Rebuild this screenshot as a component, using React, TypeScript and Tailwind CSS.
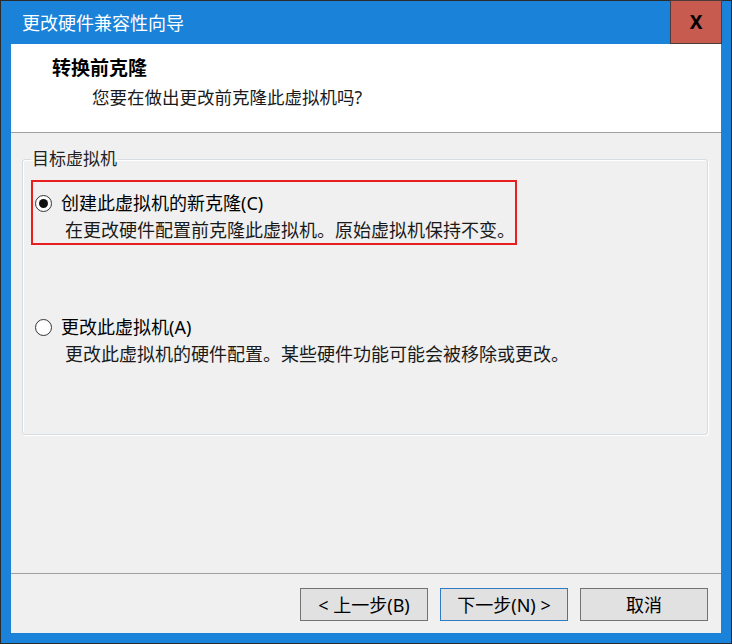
const font = "font-['Noto_Sans','Noto_Sans_CJK_SC',sans-serif]";

function Radio({ checked }: { checked: boolean }) {
  return (
    <span className="flex h-[17px] w-[17px] shrink-0 items-center justify-center rounded-full border border-[#333] bg-white">
      {checked && <span className="h-[9px] w-[9px] rounded-full bg-[#111]" />}
    </span>
  );
}

function Button({ label, primary }: { label: string; primary?: boolean }) {
  return (
    <button
      className={`h-[33px] w-[128px] border bg-[#e1e1e1] text-[18px] leading-none text-black ${
        primary ? "border-[#2f7bc4]" : "border-[#737373]"
      }`}
    >
      {label}
    </button>
  );
}

export default function App() {
  return (
    <div className={`${font} flex h-[644px] w-[732px] flex-col border border-[#2b2b2b] bg-[#1a82d8]`}>
      {/* title bar */}
      <div className="flex h-[43px] shrink-0 items-center justify-between">
        <span className="pl-[21px] text-[18px] leading-none text-white">更改硬件兼容性向导</span>
        <div className="mr-[9px] -mt-px flex h-[44px] w-[52px] items-center justify-center border border-[#4d3a3a] bg-[#c75b50]">
          <span className="text-[19px] font-bold leading-none text-black">X</span>
        </div>
      </div>

      <div className="mx-[10px] mb-[10px] flex flex-1 flex-col bg-[#f0f0f0]">
        {/* header */}
        <div className="h-[89px] shrink-0 border-b border-[#a0a0a0] bg-white pt-[12px]">
          <div className="pl-[41px] text-[19px] font-bold leading-[24px] text-black">转换前克隆</div>
          <div className="pl-[81px] pt-[5px] text-[17.5px] leading-[24px] text-[#1a1a1a]">您要在做出更改前克隆此虚拟机吗?</div>
        </div>

        {/* body */}
        <div className="flex-1 px-[11px] pr-[13px] pt-[14px]">
          <fieldset className="h-[288px] rounded-[3px] border border-[#d5dde3] px-[8px] shadow-[inset_1px_1px_0_#fff,1px_1px_0_#fff]">
            <legend className="px-[1px] text-[17px] leading-[24px] text-[#222]">目标虚拟机</legend>
            <div className="mt-[9px] h-[65px] w-[486px] border-2 border-[#e81f1f] pl-[2px] pt-[9px]">
              <div className="flex items-center gap-[9px]">
                <Radio checked />
                <span className="text-[18px] leading-[24px] text-black">创建此虚拟机的新克隆(C)</span>
              </div>
              <div className="whitespace-nowrap pl-[30px] pt-[3px] text-[18px] leading-[24px] text-[#1a1a1a]">
                在更改硬件配置前克隆此虚拟机。原始虚拟机保持不变。
              </div>
            </div>
            <div className="mt-[70px] pl-[4px]">
              <div className="flex items-center gap-[9px]">
                <Radio checked={false} />
                <span className="text-[18px] leading-[24px] text-black">更改此虚拟机(A)</span>
              </div>
              <div className="whitespace-nowrap pl-[30px] pt-[3px] text-[18px] leading-[24px] text-[#1a1a1a]">
                更改此虚拟机的硬件配置。某些硬件功能可能会被移除或更改。
              </div>
            </div>
          </fieldset>
        </div>

        {/* footer */}
        <div className="flex h-[60px] shrink-0 items-start justify-end gap-[12px] border-t border-[#a0a0a0] pr-[13px] pt-[14px]">
          <Button label="< 上一步(B)" />
          <Button label="下一步(N) >" primary />
          <Button label="取消" />
        </div>
      </div>
    </div>
  );
}
